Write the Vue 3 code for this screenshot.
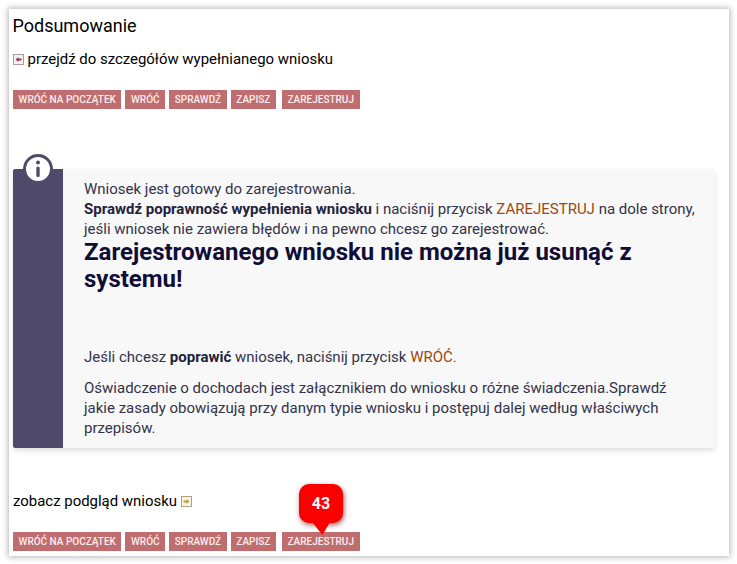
<script setup>
const buttons = ['WRÓĆ NA POCZĄTEK', 'WRÓĆ', 'SPRAWDŹ', 'ZAPISZ', 'ZAREJESTRUJ']
</script>

<template>
  <div class="page">
    <main class="sheet">
      <h1 class="title">Podsumowanie</h1>
      <p class="link top-link">
        <svg class="mini" viewBox="0 0 11 11" width="11" height="11">
          <rect x="0.5" y="0.5" width="10" height="10" fill="#f6f2f3" stroke="#a99a9f" />
          <path d="M2.5 5.5 5.5 3V4.6H8.5V6.4H5.5V8Z" fill="#9c3a46" />
        </svg>
        <span>przejdź do szczegółów wypełnianego wniosku</span>
      </p>
      <div class="buttons first">
        <span v-for="b in buttons" :key="b" class="btn">{{ b }}</span>
      </div>

      <section class="info">
        <div class="bar">
          <svg class="info-icon" viewBox="0 0 30 30" width="30" height="30">
            <circle cx="15" cy="15" r="13.5" fill="#fff" stroke="#4f4a6b" stroke-width="3" />
            <circle cx="15" cy="8.5" r="2" fill="#4f4a6b" />
            <rect x="13.3" y="12.5" width="3.4" height="10.5" rx="1.6" fill="#4f4a6b" />
          </svg>
        </div>
        <div class="body">
          <p class="lead">
            Wniosek jest gotowy do zarejestrowania.<br />
            <b>Sprawdź poprawność wypełnienia wniosku</b> i naciśnij przycisk <span class="hl">ZAREJESTRUJ</span> na dole strony, jeśli wniosek nie zawiera błędów i na pewno chcesz go zarejestrować.
          </p>
          <h2 class="warn">Zarejestrowanego wniosku nie można już usunąć z systemu!</h2>
          <p class="fix">Jeśli chcesz <b>poprawić</b> wniosek, naciśnij przycisk <span class="hl">WRÓĆ.</span></p>
          <p class="note">Oświadczenie o dochodach jest załącznikiem do wniosku o różne świadczenia.Sprawdź jakie zasady obowiązują przy danym typie wniosku i postępuj dalej według właściwych przepisów.</p>
        </div>
      </section>

      <p class="link bottom-link">
        <span>zobacz podgląd wniosku</span>
        <svg class="mini" viewBox="0 0 11 11" width="11" height="11">
          <rect x="0.5" y="0.5" width="10" height="10" fill="#f8f4e6" stroke="#aca27f" />
          <path d="M8.5 5.5 5.5 3V4.6H2.5V6.4H5.5V8Z" fill="#c9a02f" />
        </svg>
      </p>
      <div class="buttons last">
        <span v-for="b in buttons" :key="b" class="btn">{{ b }}</span>
        <div class="badge">43</div>
      </div>
    </main>
  </div>
</template>

<style>
html, body { margin: 0; background: #fff; }
</style>

<style scoped>
.page {
  width: 737px;
  height: 564px;
  padding: 9px 8px 8px 9px;
  box-sizing: border-box;
  overflow: hidden;
  font-family: Roboto, sans-serif;
}
.sheet {
  height: 547px;
  box-sizing: border-box;
  padding: 0 14px 0 4px;
  background: #fff;
  box-shadow: 0 0 6px 1px rgba(0, 0, 0, 0.3);
  display: flex;
  flex-direction: column;
}
.title {
  margin: 6px 0 0 -0.5px;
  font-size: 18px;
  line-height: 21px;
  font-weight: 400;
  color: #000;
}
.link {
  margin: 0;
  display: flex;
  align-items: center;
  gap: 4px;
  font-size: 14.95px;
  line-height: 20px;
  color: #000;
}
.top-link { margin-top: 13px; }
.mini { flex: none; margin-top: 1px; }
.top-link .mini { margin-right: -0.5px; }
.buttons {
  display: flex;
  gap: 4px;
  position: relative;
}
.first { margin-top: 21px; }
.btn {
  height: 19px;
  padding: 0 5.6px;
  background: #c06d6f;
  color: #fbeeee;
  font-size: 10px;
  font-weight: 500;
  line-height: 19px;
  white-space: nowrap;
}
.btn:last-of-type { margin-left: 2px; }
.info {
  margin-top: 60px;
  width: 702px;
  height: 279px;
  display: flex;
  background: #f8f8f9;
  border-radius: 3px;
  box-shadow: 0 3px 5px rgba(0, 0, 0, 0.12);
}
.bar {
  flex: none;
  width: 50px;
  background: #4f4a6b;
  border-radius: 2px 0 0 2px;
  position: relative;
}
.info-icon {
  position: absolute;
  left: 10px;
  top: -15px;
}
.body {
  padding: 10px 19px 0 21px;
  color: #33334a;
  font-size: 15px;
  line-height: 20px;
}
.body p { margin: 0; }
.body b { color: #22223c; }
.hl { color: #9c4a10; }
.warn {
  margin: 0;
  font-size: 24px;
  line-height: 27px;
  font-weight: 700;
  color: #100e36;
}
.body .fix { margin-top: 54px; }
.body .note { margin-top: 11px; }
.bottom-link { margin-top: 43px; }
.last { margin-top: 21px; }
.badge {
  position: absolute;
  left: 286px;
  top: -48px;
  width: 44px;
  height: 39px;
  border-radius: 10px;
  background: #fa0000;
  color: #fff;
  font-size: 16px;
  font-weight: 700;
  line-height: 39px;
  text-align: center;
  box-shadow: 1px 2px 5px rgba(120, 0, 0, 0.65);
}
.badge::after {
  content: "";
  position: absolute;
  left: 13px;
  top: 38px;
  width: 18px;
  height: 13px;
  background: #fa0000;
  clip-path: polygon(0 0, 100% 0, 58% 100%);
}
</style>
